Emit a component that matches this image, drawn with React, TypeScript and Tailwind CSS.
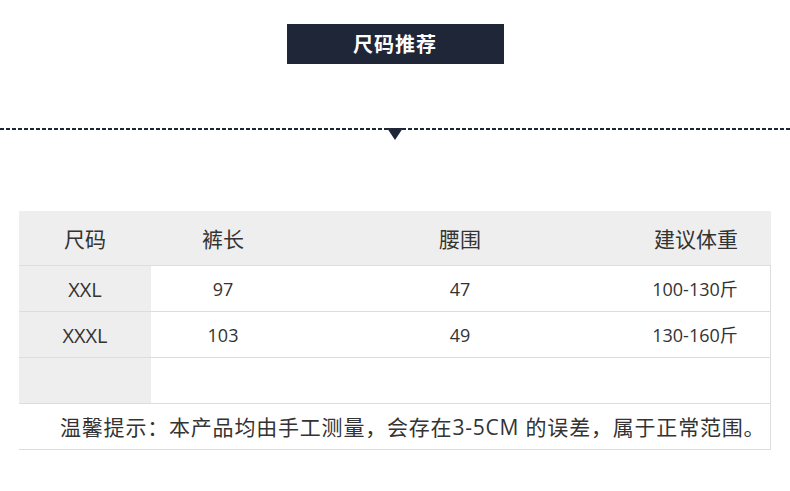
import React from 'react';

const font = { fontFamily: '"Open Sans", "Noto Sans CJK SC", sans-serif' };

const rows = [
  { size: 'XXL', length: '97', waist: '47', weight: '100-130斤' },
  { size: 'XXXL', length: '103', waist: '49', weight: '130-160斤' },
];

const cols = 'grid grid-cols-[132px_144px_330px_146px]';

export default function App() {
  return (
    <div className="w-[790px] h-[491px] bg-white text-[#333333] font-['Open_Sans','Noto_Sans_CJK_SC',sans-serif]">
      {/* Title */}
      <div className="pt-[24px] flex justify-center">
        <div className="w-[217px] h-[40px] bg-[#1e2638] flex items-center justify-center">
          <span className="text-white text-[20px] font-bold font-['Noto_Sans_CJK_SC',sans-serif] tracking-[1px]">尺码推荐</span>
        </div>
      </div>

      {/* Dashed divider */}
      <div className="mt-[64px] relative h-[2px] bg-[repeating-linear-gradient(to_right,#1e2638_0_4px,transparent_4px_6px)]">
        <div className="absolute left-[387px] top-0 w-0 h-0 border-l-[8px] border-r-[8px] border-t-[12px] border-l-transparent border-r-transparent border-t-[#1e2638]" />
      </div>

      {/* Table */}
      <div className="ml-[19px] mt-[81px] w-[752px]">
        <div className={`${cols} h-[54px] bg-[#eeeeee] items-center text-[21px] pt-[3px]`}>
          <div className="text-center">尺码</div>
          <div className="text-center">裤长</div>
          <div className="text-center">腰围</div>
          <div className="text-center pr-[4px]">建议体重</div>
        </div>
        {rows.map((r) => (
          <div key={r.size} className={`${cols} h-[46px] border-t border-[#dddddd]`}>
            <div className="bg-[#eeeeee] flex items-center justify-center text-[20px] pt-[2px]">{r.size}</div>
            <div className="flex items-center justify-center text-[18px] pt-[1px]">{r.length}</div>
            <div className="flex items-center justify-center text-[18px] pt-[1px]">{r.waist}</div>
            <div className="flex items-center justify-center text-[18px] pt-[1px] pr-[5px] border-r border-[#dddddd]">{r.weight}</div>
          </div>
        ))}
        <div className={`${cols} h-[46px] border-t border-[#dddddd]`}>
          <div className="bg-[#eeeeee]" />
          <div />
          <div />
          <div className="border-r border-[#dddddd]" />
        </div>
        <div className="h-[47px] border-t border-b border-r border-[#dddddd] flex items-center pl-[41px] pt-[2px] text-[21px] tracking-[0.8px] whitespace-nowrap" style={font}>
          温馨提示：本产品均由手工测量，会存在3-5CM 的误差，属于正常范围。
        </div>
      </div>
    </div>
  );
}
